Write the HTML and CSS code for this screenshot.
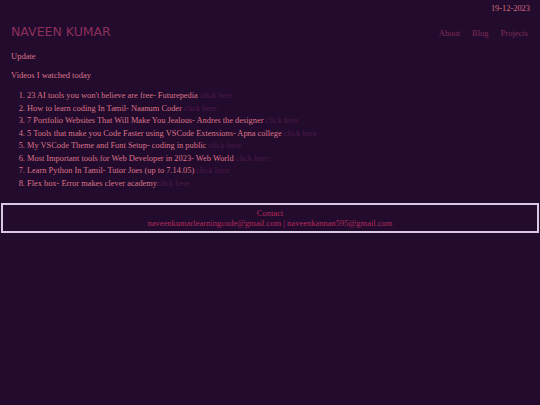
FILE: index.html
```html
<!DOCTYPE html>
<html>
<head>
<meta charset="utf-8">
<link rel="stylesheet" href="styles.css">
</head>
<body>
<div class="date">19-12-2023</div>
<header class="top">
  <h1 class="brand">NAVEEN KUMAR</h1>
  <nav class="nav">
    <a href="#">About</a>
    <a href="#">Blog</a>
    <a href="#">Projects</a>
  </nav>
</header>
<main class="main">
  <p class="update">Update</p>
  <p class="heading">Videos I watched today</p>
  <ol class="list">
    <li>23 AI tools you won't believe are free- Futurepedia <a href="#">click here</a></li>
    <li>How to learn coding In Tamil- Naanum Coder <a href="#">click here</a></li>
    <li>7 Portfolio Websites That Will Make You Jealous- Andres the designer <a href="#">click here</a></li>
    <li>5 Tools that make you Code Faster using VSCode Extensions- Apna college <a href="#">click here</a></li>
    <li>My VSCode Theme and Font Setup- coding in public <a href="#">click here</a></li>
    <li>Most Important tools for Web Developer in 2023- Web World <a href="#">click here</a></li>
    <li>Learn Python In Tamil- Tutor Joes (up to 7.14.05) <a href="#">click here</a></li>
    <li>Flex box- Error makes clever academy<a href="#">click here</a></li>
  </ol>
</main>
<footer class="footer">
  <div class="contact">Contact</div>
  <div class="emails">naveenkumarlearningcode@gmail.com | naveenkannan595@gmail.com</div>
</footer>
</body>
</html>
```
FILE: styles.css
```css
html, body {
  margin: 0;
  padding: 0;
  background: #230b2e;
  height: 100%;
}
body {
  font-family: "Liberation Serif", serif;
  font-size: 8.5px;
  color: #dc7488;
}
.date {
  text-align: right;
  padding: 4px 10px 0 0;
  font-size: 8.4px;
  line-height: 10px;
  color: #d46c80;
}
.top {
  display: flex;
  justify-content: space-between;
  align-items: center;
  padding: 10px 12px 0 11px;
}
.brand {
  margin: 0;
  font-family: "DejaVu Sans", sans-serif;
  font-weight: normal;
  font-size: 12.5px;
  line-height: 15px;
  color: #8c2f5a;
}
.nav {
  display: flex;
  gap: 12px;
  padding-top: 2px;
}
.nav a {
  color: #7f2c55;
  text-decoration: none;
  font-size: 8.5px;
}
.main {
  padding: 0 11px;
}
.update {
  margin: 12px 0 0;
  line-height: 10px;
}
.heading {
  margin: 9px 0 0;
  line-height: 10px;
}
.list {
  margin: 10px 0 0;
  padding-left: 16px;
  font-size: 8.4px;
  line-height: 12.5px;
}
.list a {
  color: #4c1a45;
  text-decoration: none;
}
.footer {
  margin-top: 13px;
  margin-left: 1px;
  margin-right: 1px;
  border: 2px solid #d9c9e2;
  text-align: center;
  padding: 3px 0 3px;
  font-size: 8.5px;
  line-height: 10px;
  color: #b02a5a;
}
```
